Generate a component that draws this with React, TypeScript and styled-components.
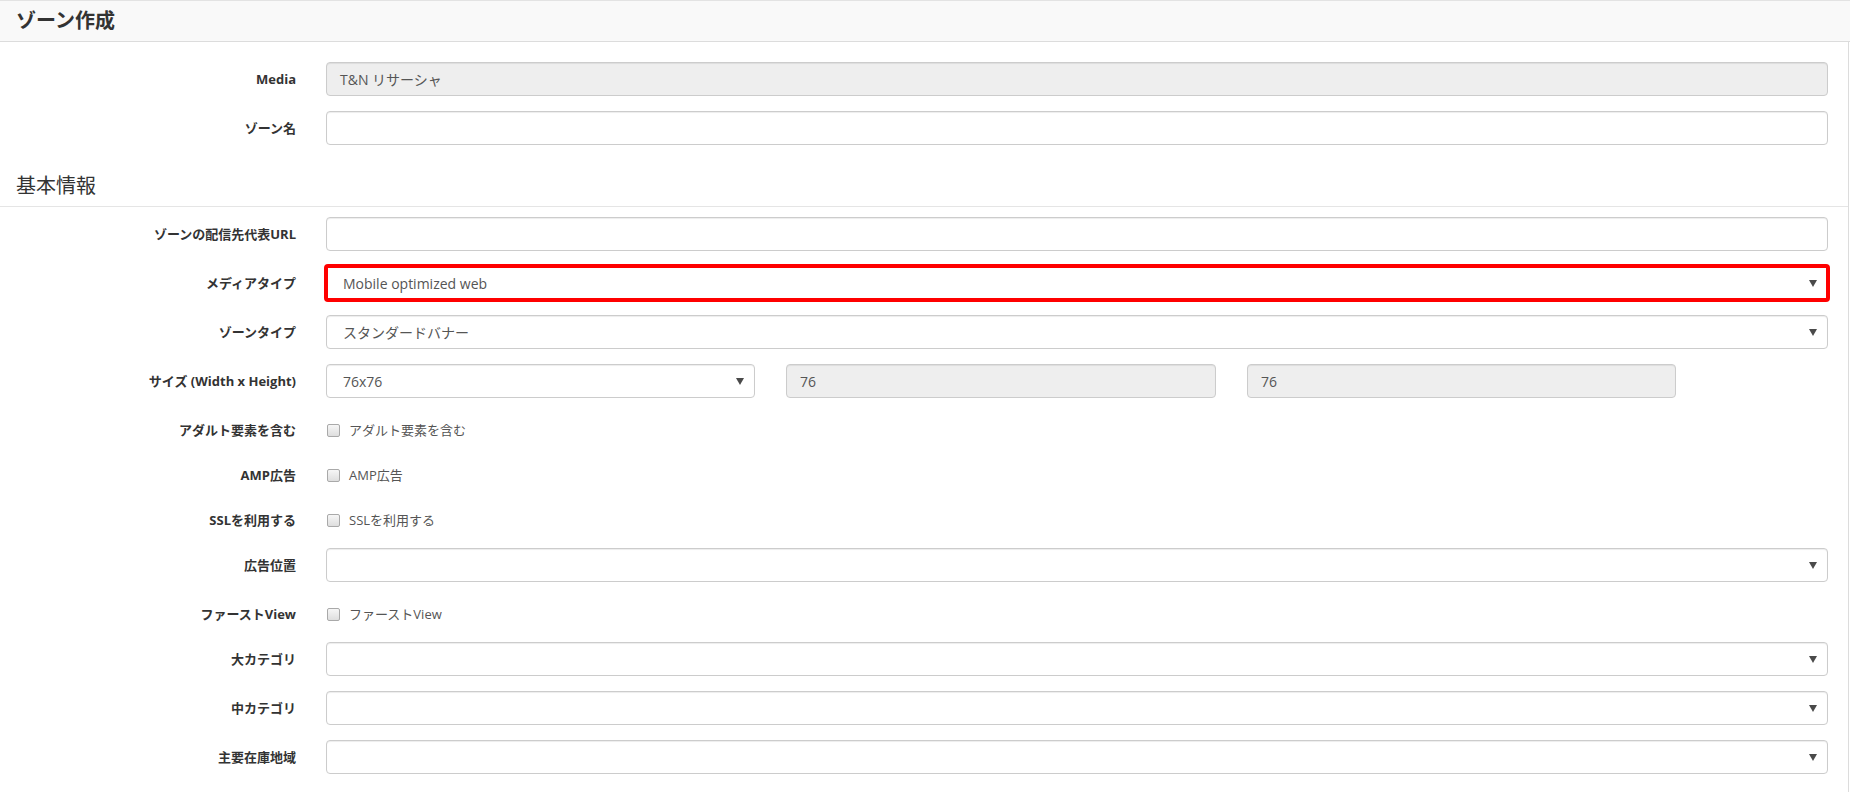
import { createGlobalStyle, styled } from 'styled-components'

const GlobalStyle = createGlobalStyle`
  html, body {
    margin: 0;
    padding: 0;
    background: #fff;
  }
  body {
    font-family: "Open Sans", "Noto Sans CJK JP", sans-serif;
    color: #333;
  }
`

const FONT = `"Open Sans", "Noto Sans CJK JP", sans-serif`

type Row =
  | { kind: 'input'; label: string; value?: string; disabled?: boolean }
  | { kind: 'select'; label: string; value?: string; marked?: boolean }
  | { kind: 'check'; label: string; text: string }
  | { kind: 'size'; label: string }

const topRows: Row[] = [
  { kind: 'input', label: 'Media', value: 'T&N リサーシャ', disabled: true },
  { kind: 'input', label: 'ゾーン名' },
]

const basicRows: Row[] = [
  { kind: 'input', label: 'ゾーンの配信先代表URL' },
  { kind: 'select', label: 'メディアタイプ', value: 'Mobile optimized web', marked: true },
  { kind: 'select', label: 'ゾーンタイプ', value: 'スタンダードバナー' },
  { kind: 'size', label: 'サイズ (Width x Height)' },
  { kind: 'check', label: 'アダルト要素を含む', text: 'アダルト要素を含む' },
  { kind: 'check', label: 'AMP広告', text: 'AMP広告' },
  { kind: 'check', label: 'SSLを利用する', text: 'SSLを利用する' },
  { kind: 'select', label: '広告位置' },
  { kind: 'check', label: 'ファーストView', text: 'ファーストView' },
  { kind: 'select', label: '大カテゴリ' },
  { kind: 'select', label: '中カテゴリ' },
  { kind: 'select', label: '主要在庫地域' },
]

const Field = ({ row }: { row: Row }) => {
  if (row.kind === 'input') {
    return <TextBox $disabled={row.disabled}>{row.value}</TextBox>
  }
  if (row.kind === 'select') {
    return (
      <SelectBox $marked={row.marked}>
        <span>{row.value}</span>
        <Caret />
      </SelectBox>
    )
  }
  if (row.kind === 'check') {
    return (
      <CheckLabel>
        <CheckBox />
        {row.text}
      </CheckLabel>
    )
  }
  return (
    <SizeGrid>
      <SelectBox>
        <span>76x76</span>
        <Caret />
      </SelectBox>
      <TextBox $disabled>76</TextBox>
      <TextBox $disabled>76</TextBox>
    </SizeGrid>
  )
}

const Rows = ({ rows }: { rows: Row[] }) => (
  <>
    {rows.map((row) => (
      <FormGroup key={row.label} $check={row.kind === 'check'}>
        <Label>{row.label}</Label>
        <Field row={row} />
      </FormGroup>
    ))}
  </>
)

const App = () => {
  return (
    <Page>
      <GlobalStyle />
      <Header>
        <Title>ゾーン作成</Title>
      </Header>
      <Body>
        <Rows rows={topRows} />
        <Section>基本情報</Section>
        <Rows rows={basicRows} />
      </Body>
    </Page>
  )
}

export default App

const Page = styled.div`
  width: 1850px;
  min-height: 792px;
  background: #fff;
`

const Header = styled.div`
  background: #f9f9f9;
  border-top: 1px solid #e3e3e3;
  border-bottom: 1px solid #dcdcdc;
  box-sizing: border-box;
  height: 42px;
  display: flex;
  align-items: center;
  padding-left: 16px;
`

const Title = styled.h1`
  margin: 0;
  font-family: ${FONT};
  font-size: 20px;
  font-weight: 700;
  color: #333;
  line-height: 28px;
`

const Body = styled.div`
  width: 1849px;
  box-sizing: border-box;
  border-right: 1px solid #dcdcdc;
  padding: 20px 20px 20px 0;
`

const FormGroup = styled.div<{ $check?: boolean }>`
  display: grid;
  grid-template-columns: 296px 1fr;
  column-gap: 30px;
  align-items: center;
  margin-bottom: 15px;
  ${(p) => (p.$check ? 'height: 30px; padding-top: 4px; box-sizing: border-box;' : '')}
`

const Label = styled.label`
  text-align: right;
  font-family: ${FONT};
  font-size: 13px;
  font-weight: 700;
  color: #333;
  line-height: 20px;
`

const Section = styled.div`
  font-family: ${FONT};
  font-size: 20px;
  font-weight: 400;
  color: #333;
  line-height: 28px;
  padding: 12px 16px 6px;
  margin-right: -20px;
  border-bottom: 1px solid #e5e5e5;
  margin-bottom: 10px;
`

const TextBox = styled.div<{ $disabled?: boolean }>`
  height: 34px;
  box-sizing: border-box;
  border: 1px solid #ccc;
  border-radius: 4px;
  background: ${(p) => (p.$disabled ? '#eee' : '#fff')};
  box-shadow: inset 0 1px 1px rgba(0, 0, 0, 0.075);
  padding: 0 13px;
  display: flex;
  align-items: center;
  font-family: ${FONT};
  font-size: 14px;
  color: #555;
`

const SelectBox = styled.div<{ $marked?: boolean }>`
  height: 34px;
  box-sizing: border-box;
  border: 1px solid #ccc;
  border-radius: 4px;
  background: #fff;
  box-shadow: inset 0 1px 1px rgba(0, 0, 0, 0.075);
  padding: 0 10px 0 16px;
  display: flex;
  align-items: center;
  justify-content: space-between;
  font-family: ${FONT};
  font-size: 14px;
  color: #555;
  ${(p) => (p.$marked ? 'outline: 4px solid #f00; outline-offset: -2px; border-radius: 2px;' : '')}
`

const Caret = styled.span`
  width: 0;
  height: 0;
  border-left: 4px solid transparent;
  border-right: 4px solid transparent;
  border-top: 7px solid #4a4a4a;
  margin-top: 1px;
`

const SizeGrid = styled.div`
  display: grid;
  grid-template-columns: 429px 430px 429px;
  column-gap: 31px;
`

const CheckLabel = styled.label`
  display: flex;
  align-items: center;
  font-family: ${FONT};
  font-size: 13px;
  color: #555;
  line-height: 20px;
`

const CheckBox = styled.span`
  width: 11px;
  height: 11px;
  border: 1px solid #a9a9a9;
  border-radius: 2px;
  background: linear-gradient(#f6f6f6, #dedede);
  margin: 0 9px 0 1px;
`
